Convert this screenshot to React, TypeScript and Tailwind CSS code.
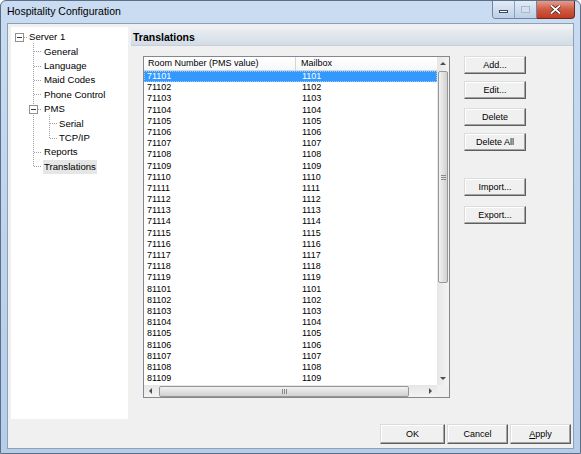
import React from 'react';

const rows: string[] = [];
for (let i = 1; i <= 19; i++) rows.push(String(71100 + i));
for (let i = 1; i <= 9; i++) rows.push(String(81100 + i));

const FONT = { fontFamily: '"Liberation Sans", Arial, sans-serif' };

const Btn: React.FC<{ label: React.ReactNode; className?: string }> = ({ label, className = '' }) => (
  <button
    className={`flex items-center justify-center border border-t-[#dcdcdc] border-l-[#dcdcdc] border-r-[#5f5f5f] border-b-[#5f5f5f] bg-[#f0f0f0] shadow-[inset_-1px_-1px_0_#a3a3a3,inset_1px_1px_0_#ffffff] text-[9px] text-black leading-none ${className}`}
  >
    {label}
  </button>
);

const TreeLines: React.FC = () => {
  const c = (i: number) => Math.floor(10.2 + 14.4 * i) + 0.5;
  const dot = { stroke: '#a0a0a0', strokeWidth: 1, strokeDasharray: '1 1' };
  return (
    <svg className="absolute left-0 top-0 pointer-events-none" width="117" height="160" shapeRendering="crispEdges">
      {/* root box */}
      <rect x="4.5" y={c(0) - 4} width="8" height="8" fill="#fff" stroke="#919191" />
      <line x1="6" x2="11" y1={c(0)} y2={c(0)} stroke="#3a3a3a" />
      <line x1="13" x2="17" y1={c(0)} y2={c(0)} {...dot} />
      {/* level 1 vertical */}
      <line x1="22.5" x2="22.5" y1={c(0) + 5} y2={c(9)} {...dot} />
      {[1, 2, 3, 4, 8, 9].map((i) => (
        <line key={i} x1="23" x2="31" y1={c(i)} y2={c(i)} {...dot} />
      ))}
      {/* PMS box */}
      <rect x="18.5" y={c(5) - 4} width="8" height="8" fill="#fff" stroke="#919191" />
      <line x1="20" x2="25" y1={c(5)} y2={c(5)} stroke="#3a3a3a" />
      <line x1="27" x2="31" y1={c(5)} y2={c(5)} {...dot} />
      {/* level 2 */}
      <line x1="38.5" x2="38.5" y1={c(5) + 5} y2={c(7)} {...dot} />
      {[6, 7].map((i) => (
        <line key={i} x1="39" x2="46" y1={c(i)} y2={c(i)} {...dot} />
      ))}
    </svg>
  );
};

const treeItems: { label: string; indent: number; selected?: boolean }[] = [
  { label: 'Server 1', indent: 17 },
  { label: 'General', indent: 32 },
  { label: 'Language', indent: 32 },
  { label: 'Maid Codes', indent: 32 },
  { label: 'Phone Control', indent: 32 },
  { label: 'PMS', indent: 32 },
  { label: 'Serial', indent: 47 },
  { label: 'TCP/IP', indent: 47 },
  { label: 'Reports', indent: 32 },
  { label: 'Translations', indent: 32, selected: true },
];

const Arrow: React.FC<{ dir: 'up' | 'down' | 'left' | 'right' }> = ({ dir }) => {
  const pts = {
    up: '1,4 4,1 7,4',
    down: '1,1 4,4 7,1',
    left: '4,1 1,4 4,7',
    right: '1,1 4,4 1,7',
  }[dir];
  const vert = dir === 'up' || dir === 'down';
  return (
    <svg width={vert ? 8 : 5} height={vert ? 5 : 8} viewBox={vert ? '0 0 8 5' : '0 0 5 8'}>
      <polygon points={pts} fill="#4d4d4d" />
    </svg>
  );
};

export default function App() {
  return (
    <div className="w-[581px] h-[454px] bg-white overflow-hidden" style={FONT}>
      <div className="w-full h-full flex flex-col border border-[#5b6f86] rounded-t-[6px] bg-gradient-to-b from-[#c9dcf1] via-[#bfd4ec] to-[#b6cde8]">
        {/* title bar */}
        <div className="h-[22px] flex items-start">
          <span className="pl-[6px] pt-[5px] text-[10.5px] leading-none text-black">Hospitality Configuration</span>
          <div className="ml-auto mr-[5px] flex h-[18px]">
            <div className="flex border border-t-0 border-[#6e84a2] rounded-bl-[4px] overflow-hidden">
              <div className="w-[22px] h-full bg-gradient-to-b from-[#e2ecf7] to-[#bccfe6] flex items-center justify-center border-r border-[#8ea2bd]">
                <div className="w-[9px] h-[3px] bg-white border border-[#3b4a5e] mt-[3px]" />
              </div>
              <div className="w-[21px] h-full bg-gradient-to-b from-[#e2ecf7] to-[#bccfe6] flex items-center justify-center">
                <div className="w-[9px] h-[7px] border border-[#a9b8cc] bg-[#d4e0ee]" />
              </div>
            </div>
            <div className="w-[38px] h-full border border-t-0 border-l-0 border-[#6a2a1f] rounded-br-[4px] bg-gradient-to-b from-[#e79b8b] via-[#cf5a42] to-[#c23a20] flex items-center justify-center">
              <svg width="11" height="9" viewBox="0 0 11 9">
                <path d="M1 0.5 L10 8.5 M10 0.5 L1 8.5" stroke="#3b1410" strokeWidth="3.2" />
                <path d="M1 0.5 L10 8.5 M10 0.5 L1 8.5" stroke="#ffffff" strokeWidth="1.8" />
              </svg>
            </div>
          </div>
        </div>

        {/* client area */}
        <div className="flex-1 mx-[6px] mb-[4px] border border-[#8aa0bb] bg-[#f0f0f0] flex flex-col">
          <div className="flex-1 flex">
            {/* tree */}
            <div className="ml-[3px] mt-[3px] w-[117px] h-[392px] bg-white relative pt-[3px]">
              <TreeLines />
              {treeItems.map((t) => (
                <div key={t.label} className="h-[14.4px] flex items-center" style={{ paddingLeft: t.indent }}>
                  <span
                    className={`text-[9.6px] leading-[14px] px-[1px] text-black ${t.selected ? 'bg-[#e6e6e6]' : ''}`}
                  >
                    {t.label}
                  </span>
                </div>
              ))}
            </div>

            {/* right pane */}
            <div className="flex-1 pl-[3px] pt-[5px] flex flex-col">
              <div className="h-[17px] bg-gradient-to-b from-[#e9edf2] to-[#d3dbe5] border-b border-[#c5ced9] flex items-center pl-[2px]">
                <span className="text-[10.5px] font-bold text-black leading-none">Translations</span>
              </div>
              <div className="flex mt-[10px] pl-[12px]">
                {/* list view */}
                <div className="w-[307px] h-[342px] border border-[#828790] bg-white flex flex-col">
                  <div className="flex flex-1 min-h-0">
                    <div className="flex-1 flex flex-col min-w-0 overflow-hidden">
                      <div className="h-[14px] flex border-b border-[#d5d5d5] bg-gradient-to-b from-white to-[#f6f7f8] text-[9px] leading-[13px] shrink-0">
                        <div className="w-[152px] pl-[4px] border-r border-[#d5d5d5]">Room Number (PMS value)</div>
                        <div className="pl-[5px]">Mailbox</div>
                      </div>
                      <div className="flex-1 overflow-hidden">
                        {rows.map((r, i) => (
                          <div
                            key={r}
                            className={`h-[11.2px] flex text-[9px] leading-[11px] ${i === 0 ? 'bg-[#3399ff] text-white outline-dotted outline-1 -outline-offset-1 outline-[#9cc9f5]' : 'text-black'}`}
                          >
                            <div className="w-[152px] pl-[3px]">{r}</div>
                            <div className="pl-[6px]">{r.slice(1)}</div>
                          </div>
                        ))}
                      </div>
                    </div>
                    {/* vertical scrollbar */}
                    <div className="w-[12px] flex flex-col bg-gradient-to-r from-[#e6e6e6] to-[#f4f4f4]">
                      <div className="h-[13px] flex items-center justify-center">
                        <Arrow dir="up" />
                      </div>
                      <div className="h-[212px] mx-[1px] mt-[1px] rounded-[2px] border border-[#979797] bg-gradient-to-r from-[#f2f2f2] to-[#d0d0d0] flex items-center justify-center">
                        <div className="flex flex-col gap-[1px]">
                          <div className="w-[5px] h-[1px] bg-[#8a8a8a]" />
                          <div className="w-[5px] h-[1px] bg-[#8a8a8a]" />
                          <div className="w-[5px] h-[1px] bg-[#8a8a8a]" />
                        </div>
                      </div>
                      <div className="flex-1" />
                      <div className="h-[13px] flex items-center justify-center">
                        <Arrow dir="down" />
                      </div>
                    </div>
                  </div>
                  {/* horizontal scrollbar */}
                  <div className="h-[12px] flex shrink-0">
                    <div className="flex-1 flex items-center bg-gradient-to-b from-[#e6e6e6] to-[#f4f4f4]">
                      <div className="w-[13px] flex justify-center">
                        <Arrow dir="left" />
                      </div>
                      <div className="w-[250px] h-[11px] ml-[2px] rounded-[2px] border border-[#979797] bg-gradient-to-b from-[#f2f2f2] to-[#d0d0d0] flex items-center justify-center gap-[1px]">
                        <div className="w-[1px] h-[5px] bg-[#8a8a8a]" />
                        <div className="w-[1px] h-[5px] bg-[#8a8a8a]" />
                        <div className="w-[1px] h-[5px] bg-[#8a8a8a]" />
                      </div>
                      <div className="flex-1" />
                      <div className="w-[13px] flex justify-center">
                        <Arrow dir="right" />
                      </div>
                    </div>
                    <div className="w-[12px] bg-[#f0f0f0]" />
                  </div>
                </div>

                {/* side buttons */}
                <div className="ml-[14px] flex flex-col">
                  <Btn label="Add..." className="w-[62px] h-[18px]" />
                  <Btn label="Edit..." className="w-[62px] h-[18px] mt-[7px]" />
                  <Btn label="Delete" className="w-[62px] h-[18px] mt-[9px]" />
                  <Btn label="Delete All" className="w-[62px] h-[18px] mt-[7px]" />
                  <Btn label="Import..." className="w-[62px] h-[18px] mt-[27px]" />
                  <Btn label="Export..." className="w-[62px] h-[18px] mt-[10px]" />
                </div>
              </div>
            </div>
          </div>

          {/* bottom buttons */}
          <div className="flex justify-end gap-[2px] pr-[2px] pt-[4px] pb-[4px]">
            <Btn label="OK" className="w-[65px] h-[20px]" />
            <Btn label="Cancel" className="w-[61px] h-[20px]" />
            <Btn label={<span><u>A</u>pply</span>} className="w-[61px] h-[20px]" />
          </div>
        </div>
      </div>
    </div>
  );
}
